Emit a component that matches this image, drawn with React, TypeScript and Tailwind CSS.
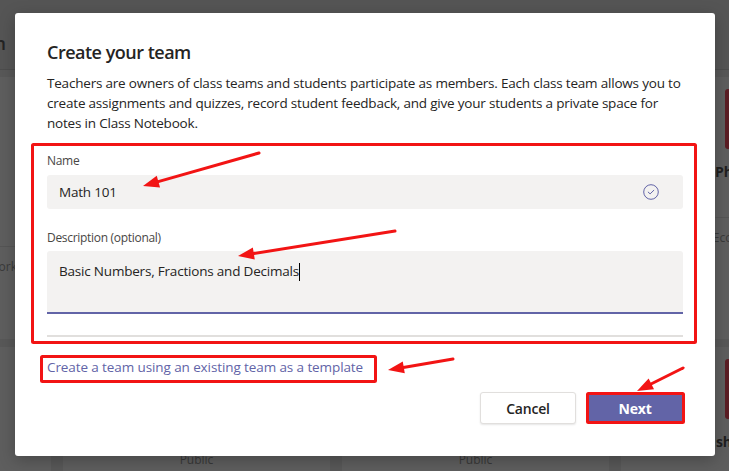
import React from 'react'

type CardProps = {
  name: string
  desc?: string
  avatar: string
  showPublic?: boolean
  lowDivider?: boolean
}

// dimmed team card that sits behind the dialog
function TeamCard({ name, desc, avatar, showPublic, lowDivider }: CardProps) {
  return (
    <div className="h-[262px] bg-[#5e5e5e] flex flex-col pt-[12px]">
      <div className={`mx-auto h-[60px] w-[60px] rounded-[3px] ${avatar}`} />
      <div className="mt-[13px] text-center text-[14px] font-bold leading-[20px] text-[#1f1f1f] whitespace-nowrap">
        {name}
      </div>
      {showPublic && (
        <div className="text-center text-[12px] leading-[16px] text-[#383838]">Public</div>
      )}
      {desc && (
        <>
          <div className={`${lowDivider ? 'mt-[64px]' : 'mt-[35px]'} h-px bg-[#555555]`} />
          <div
            className={`mt-[12px] text-[12px] leading-[16px] text-[#3a3a3a] whitespace-nowrap ${
              lowDivider ? 'pr-[34px] text-right' : 'text-center'
            }`}
          >
            {desc}
          </div>
        </>
      )}
    </div>
  )
}

function Background() {
  return (
    <div className="flex flex-col">
      <div className="h-[70px] border-b border-[#4d4d4d] bg-[#555555] pt-[34px]">
        <div className="w-[6px] overflow-hidden flex justify-end">
          <span className="text-[18px] font-semibold leading-none text-[#232323] whitespace-nowrap">Join</span>
        </div>
      </div>
      <div className="ml-[-216px] mt-[7px] grid grid-cols-[repeat(4,267px)] gap-x-[12px] gap-y-[8px]">
        <TeamCard name="Homework" desc="Class homework" avatar="bg-[#4f5a6e]" lowDivider />
        <TeamCard name="Biology" desc="Biology" avatar="bg-[#5c2b2b]" />
        <TeamCard name="History" desc="History" avatar="bg-[#3f4d5c]" />
        <TeamCard name="Physics 101" desc="Economics 101" avatar="bg-[#5b1d24]" />
        <TeamCard name="Algebra" avatar="bg-[#4f5a6e]" showPublic />
        <TeamCard name="Geometry" avatar="bg-[#5c2b2b]" showPublic />
        <TeamCard name="Geography" avatar="bg-[#3f4d5c]" showPublic />
        <TeamCard name="English Literature 10" avatar="bg-[#5b1d24]" showPublic />
      </div>
    </div>
  )
}

function Arrow({ x1, y1, x2, y2 }: { x1: number; y1: number; x2: number; y2: number }) {
  const dx = x2 - x1
  const dy = y2 - y1
  const len = Math.sqrt(dx * dx + dy * dy)
  const ux = dx / len
  const uy = dy / len
  const head = 16
  const half = 6
  const bx = x2 - ux * head
  const by = y2 - uy * head
  const pts = [
    [x2, y2],
    [bx - uy * half, by + ux * half],
    [bx + uy * half, by - ux * half],
  ]
    .map((p) => p.join(','))
    .join(' ')
  return (
    <g>
      <line x1={x1} y1={y1} x2={bx + ux * 2} y2={by + uy * 2} stroke="#f21414" strokeWidth={3} strokeLinecap="round" />
      <polygon points={pts} fill="#f21414" />
    </g>
  )
}

function CheckCircle() {
  return (
    <svg width="16" height="16" viewBox="0 0 16 16" fill="none">
      <circle cx="8" cy="8" r="7.3" stroke="#6264a7" strokeWidth="1" />
      <path d="M5.2 8.1 L7.1 9.9 L10.8 6.3" stroke="#6264a7" strokeWidth="1" strokeLinecap="round" strokeLinejoin="round" />
    </svg>
  )
}

export default function App() {
  return (
    <div className="relative h-[471px] w-[729px] overflow-hidden bg-[#585858] font-['Segoe_UI','Open_Sans',sans-serif]">
      <Background />

      {/* Dialog */}
      <div className="absolute left-[15px] top-[13px] h-[443px] w-[700px] rounded-[3px] bg-white shadow-[0_4px_16px_rgba(0,0,0,0.25)]">
        <div className="flex flex-col px-[32px] pt-[25px]">
          <h2 className="text-[18px] font-semibold leading-[28px] tracking-[-0.5px] text-[#252423]">Create your team</h2>
          <p className="mt-[7px] text-[13.5px] leading-[20px] tracking-[-0.2px] text-[#252423] whitespace-nowrap">
            Teachers are owners of class teams and students participate as members. Each class team allows you to
            <br />
            create assignments and quizzes, record student feedback, and give your students a private space for
            <br />
            notes in Class Notebook.
          </p>

          <label className="mt-[20px] text-[12px] leading-[16px] tracking-[-0.3px] text-[#484644]">Name</label>
          <div className="mt-[6px] flex h-[34px] items-center rounded-[3px] bg-[#f3f2f1] pl-[12px] pr-[24px]">
            <span className="flex-1 text-[13.5px] tracking-[-0.2px] text-[#252423]">Math 101</span>
            <CheckCircle />
          </div>

          <label className="mt-[21px] text-[12px] leading-[16px] tracking-[-0.3px] text-[#484644]">
            Description (optional)
          </label>
          <div className="mt-[5px] h-[63px] rounded-t-[3px] border-b-2 border-[#6264a7] bg-[#f3f2f1] px-[12px] pt-[7px]">
            <span className="text-[13.5px] leading-[20px] tracking-[-0.2px] text-[#252423]">
              Basic Numbers, Fractions and Decimals
              <span className="inline-block h-[18px] w-px bg-black align-middle" />
            </span>
          </div>

          <div className="mt-[21px] h-[2px] bg-[#e1dfdd]" />

          <a className="mt-[20px] text-[13.5px] leading-[20px] tracking-[-0.1px] text-[#6264a7]">
            Create a team using an existing team as a template
          </a>

          <div className="mt-[15px] flex justify-end gap-[11px]">
            <button className="h-[32px] w-[96px] rounded-[3px] border border-[#e1dfdd] bg-white text-[14px] font-semibold tracking-[-0.2px] text-[#252423] shadow-[0_1px_2px_rgba(0,0,0,0.1)]">
              Cancel
            </button>
            <button className="h-[32px] w-[96px] rounded-[3px] bg-[#6264a7] text-[14px] font-bold tracking-[-0.2px] text-white">
              Next
            </button>
          </div>
        </div>
      </div>

      {/* Red annotations drawn over the screenshot */}
      <svg className="pointer-events-none absolute inset-0" width="729" height="471" viewBox="0 0 729 471">
        <rect x="32.5" y="144.5" width="663" height="198" rx="1" fill="none" stroke="#f21414" strokeWidth="3" />
        <rect x="41.5" y="356.5" width="334" height="25" rx="1" fill="none" stroke="#f21414" strokeWidth="3" />
        <rect x="587.5" y="393.5" width="96" height="29" rx="1" fill="none" stroke="#f21414" strokeWidth="3" />
        <Arrow x1={259} y1={153} x2={143} y2={186} />
        <Arrow x1={395} y1={231} x2={238} y2={256} />
        <Arrow x1={453} y1={359} x2={388} y2={370} />
        <Arrow x1={683} y1={368} x2={637} y2={391} />
      </svg>
    </div>
  )
}
